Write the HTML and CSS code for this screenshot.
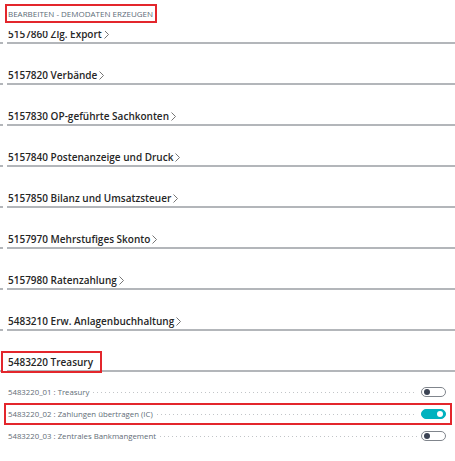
FILE: index.html
```html
<!DOCTYPE html>
<html lang="de">
<head>
  <meta charset="UTF-8" />
  <title>Bearbeiten - Demodaten erzeugen</title>
  <link rel="stylesheet" href="styles.css">
</head>
<body>
  <div class="page-head">
    <span class="page-title">BEARBEITEN - DEMODATEN ERZEUGEN</span>
  </div>

  <div class="list">
    <div class="section">
      <div class="section-head">5157860 Zlg. Export<svg class="chevron" viewBox="0 0 5 9"><polyline points="0.5,0.5 4.5,4.5 0.5,8.5"/></svg></div>
    </div>
    <div class="section">
      <div class="section-head">5157820 Verbände<svg class="chevron" viewBox="0 0 5 9"><polyline points="0.5,0.5 4.5,4.5 0.5,8.5"/></svg></div>
    </div>
    <div class="section">
      <div class="section-head">5157830 OP-geführte Sachkonten<svg class="chevron" viewBox="0 0 5 9"><polyline points="0.5,0.5 4.5,4.5 0.5,8.5"/></svg></div>
    </div>
    <div class="section">
      <div class="section-head">5157840 Postenanzeige und Druck<svg class="chevron" viewBox="0 0 5 9"><polyline points="0.5,0.5 4.5,4.5 0.5,8.5"/></svg></div>
    </div>
    <div class="section">
      <div class="section-head">5157850 Bilanz und Umsatzsteuer<svg class="chevron" viewBox="0 0 5 9"><polyline points="0.5,0.5 4.5,4.5 0.5,8.5"/></svg></div>
    </div>
    <div class="section">
      <div class="section-head">5157970 Mehrstufiges Skonto<svg class="chevron" viewBox="0 0 5 9"><polyline points="0.5,0.5 4.5,4.5 0.5,8.5"/></svg></div>
    </div>
    <div class="section">
      <div class="section-head">5157980 Ratenzahlung<svg class="chevron" viewBox="0 0 5 9"><polyline points="0.5,0.5 4.5,4.5 0.5,8.5"/></svg></div>
    </div>
    <div class="section">
      <div class="section-head">5483210 Erw. Anlagenbuchhaltung<svg class="chevron" viewBox="0 0 5 9"><polyline points="0.5,0.5 4.5,4.5 0.5,8.5"/></svg></div>
    </div>
    <div class="section">
      <div class="section-head"><span class="marked">5483220 Treasury</span></div>
    </div>

    <div class="rows">
      <div class="row">
        <span class="row-label">5483220_01 : Treasury</span>
        <span class="leader"></span>
        <span class="toggle"><span class="knob"></span></span>
      </div>
      <div class="row row-marked">
        <span class="row-label">5483220_02 : Zahlungen übertragen (IC)</span>
        <span class="leader"></span>
        <span class="toggle on"><span class="knob"></span></span>
      </div>
      <div class="row">
        <span class="row-label">5483220_03 : Zentrales Bankmangement</span>
        <span class="leader"></span>
        <span class="toggle"><span class="knob"></span></span>
      </div>
    </div>
  </div>
</body>
</html>
```

FILE: styles.css
```css
body {
  margin: 0;
  background: #fff;
  font-family: 'Open Sans', 'Noto Sans', sans-serif;
  color: #262626;
  overflow: hidden;
}

.page-head {
  position: sticky;
  top: 0;
  z-index: 1;
  height: 31px;
  background: #fff;
}

.page-title {
  display: inline-block;
  margin: 5px 0 0 6px;
  padding: 2px 3px 2px 2px;
  font-size: 8px;
  line-height: 13px;
  color: #5d6b78;
  outline: 2px solid #e3262c;
  outline-offset: -1px;
}

.list {
  margin-top: -28px;
}

.section {
  padding: 23px 0 0 7px;
  background: linear-gradient(#b3b6ba, #b3b6ba) 0 100% / 3px 2px no-repeat;
}

.section-head {
  display: flex;
  align-items: center;
  height: 16px;
  padding-left: 1px;
  font-size: 10px;
  font-weight: 600;
  line-height: 16px;
  border-bottom: 2px solid #b3b6ba;
}

.chevron {
  width: 5px;
  height: 9px;
  margin-left: 2px;
  fill: none;
  stroke: #666;
  stroke-width: 0.9;
}

.marked {
  display: inline-block;
  margin-left: -4px;
  padding: 0 6px 0 4px;
  outline: 2px solid #e3262c;
  outline-offset: 1px;
}

.rows {
  padding-top: 9px;
}

.row {
  display: flex;
  align-items: center;
  height: 22px;
  margin: 0 3px 0 4px;
  padding: 0 6px 0 4px;
}

.row-marked {
  outline: 2px solid #e3262c;
  outline-offset: -2px;
}

.row-label {
  font-size: 7.8px;
  color: #626c76;
  white-space: nowrap;
}

.leader {
  flex: 1;
  height: 1px;
  margin: 1px 4px 0 4px;
  background-image: linear-gradient(to right, #c2c5c8 1px, transparent 1px);
  background-size: 4px 1px;
  background-repeat: repeat-x;
}

.toggle {
  display: flex;
  align-items: center;
  box-sizing: border-box;
  width: 25px;
  height: 10px;
  padding: 0 2px;
  border: 1px solid #80858c;
  border-radius: 5px;
  background: #fff;
}

.knob {
  width: 6px;
  height: 6px;
  border-radius: 50%;
  background: #3c4454;
}

.toggle.on {
  justify-content: flex-end;
  border-color: #00b2bf;
  background: #00b2bf;
}

.toggle.on .knob {
  background: #fff;
}
```
